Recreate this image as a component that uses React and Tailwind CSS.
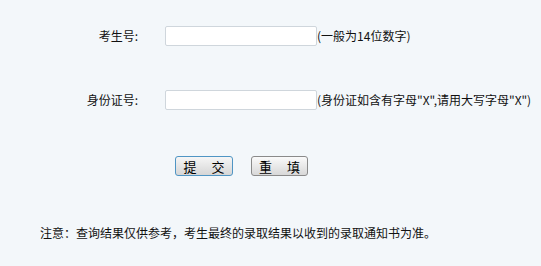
export default function App() {
  return (
    <div
      className="w-[541px] h-[266px] bg-[#f3f7fa] text-[12px] text-[#111] pt-[26px]"
      style={{ fontFamily: '"Noto Sans CJK SC", "Noto Sans", sans-serif' }}
    >
      <div className="flex items-center h-[20px]">
        <div className="w-[138px] text-right">考生号:</div>
        <input
          type="text"
          className="ml-[27px] w-[152px] h-[20px] bg-white border border-[#cfd6dc] rounded-[2px] outline-none"
        />
        <span className="whitespace-nowrap">(一般为14位数字)</span>
      </div>

      <div className="flex items-center h-[20px] mt-[44px]">
        <div className="w-[138px] text-right">身份证号:</div>
        <input
          type="text"
          className="ml-[27px] w-[152px] h-[20px] bg-white border border-[#cfd6dc] rounded-[2px] outline-none"
        />
        <span className="whitespace-nowrap">(身份证如含有字母"X",请用大写字母"X")</span>
      </div>

      <div className="flex items-center mt-[46px] pl-[175px] gap-[18px]">
        <button className="w-[58px] h-[20px] border border-[#4f95c4] rounded-[3px] bg-gradient-to-b from-[#f6f6f6] to-[#d6d6d6] text-[13px] leading-none flex items-center justify-center gap-[15px] text-black">
          <span>提</span>
          <span>交</span>
        </button>
        <button className="w-[57px] h-[20px] border border-[#8a8a8a] rounded-[3px] bg-gradient-to-b from-[#fafafa] to-[#d8d8d8] text-[13px] leading-none flex items-center justify-center gap-[15px] text-black">
          <span>重</span>
          <span>填</span>
        </button>
      </div>

      <div className="mt-[49px] pl-[40px] leading-[16px]">
        注意：查询结果仅供参考，考生最终的录取结果以收到的录取通知书为准。
      </div>
    </div>
  )
}
